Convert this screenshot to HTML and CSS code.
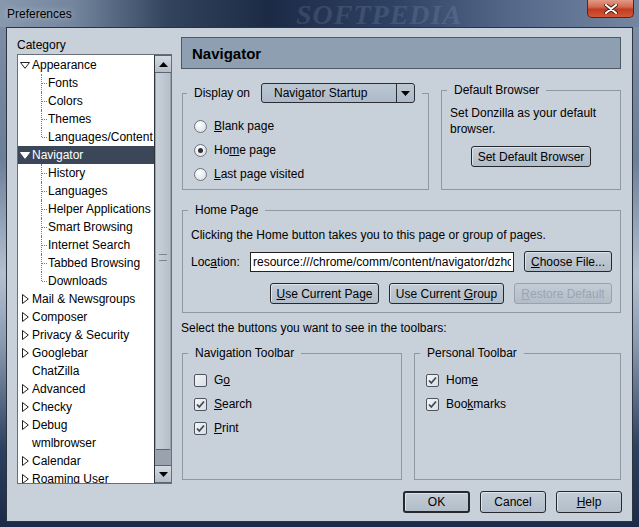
FILE: index.html
```html
<!DOCTYPE html>
<html lang="en">
<head>
    <meta charset="UTF-8">
    <meta name="viewport" content="width=device-width, initial-scale=1.0">
    <title>Preferences</title>
    <link rel="stylesheet" href="styles.css">
</head>
<body>
<div class="window">

    <!-- Title bar -->
    <div class="titlebar">
        <span class="title">Preferences</span>
        <span class="watermark">SOFTPEDIA</span>
        <div class="close-btn">
            <svg width="14" height="10" viewBox="0 0 14 10"><path d="M2 1 L12 9 M12 1 L2 9" stroke="#3a1008" stroke-width="3.6" stroke-linecap="round"/><path d="M2 1 L12 9 M12 1 L2 9" stroke="#fff" stroke-width="2.2" stroke-linecap="round"/></svg>
        </div>
    </div>

    <div class="client">

        <!-- Category tree -->
        <div class="category">
            <div class="category-label">Category</div>
            <div class="tree">
                <div class="tree-rows">
                    <div class="row"><span class="twisty"><svg width="10" height="7" viewBox="0 0 10 7"><path d="M0.5 0.5 H9.5 L5 6.3 Z" fill="#fff" stroke="#222"/></svg></span>Appearance</div>
                    <div class="row child">Fonts</div>
                    <div class="row child">Colors</div>
                    <div class="row child">Themes</div>
                    <div class="row child last">Languages/Content</div>
                    <div class="row selected"><span class="twisty"><svg width="10" height="7" viewBox="0 0 10 7"><path d="M0.5 0.5 H9.5 L5 6.3 Z" fill="#fff" stroke="#fff"/></svg></span>Navigator</div>
                    <div class="row child">History</div>
                    <div class="row child">Languages</div>
                    <div class="row child">Helper Applications</div>
                    <div class="row child">Smart Browsing</div>
                    <div class="row child">Internet Search</div>
                    <div class="row child">Tabbed Browsing</div>
                    <div class="row child last">Downloads</div>
                    <div class="row"><span class="twisty closed"><svg width="7" height="10" viewBox="0 0 7 10"><path d="M0.5 0.5 L6.3 5 L0.5 9.5 Z" fill="#fff" stroke="#222"/></svg></span>Mail &amp; Newsgroups</div>
                    <div class="row"><span class="twisty closed"><svg width="7" height="10" viewBox="0 0 7 10"><path d="M0.5 0.5 L6.3 5 L0.5 9.5 Z" fill="#fff" stroke="#222"/></svg></span>Composer</div>
                    <div class="row"><span class="twisty closed"><svg width="7" height="10" viewBox="0 0 7 10"><path d="M0.5 0.5 L6.3 5 L0.5 9.5 Z" fill="#fff" stroke="#222"/></svg></span>Privacy &amp; Security</div>
                    <div class="row"><span class="twisty closed"><svg width="7" height="10" viewBox="0 0 7 10"><path d="M0.5 0.5 L6.3 5 L0.5 9.5 Z" fill="#fff" stroke="#222"/></svg></span>Googlebar</div>
                    <div class="row"><span class="twisty"></span>ChatZilla</div>
                    <div class="row"><span class="twisty closed"><svg width="7" height="10" viewBox="0 0 7 10"><path d="M0.5 0.5 L6.3 5 L0.5 9.5 Z" fill="#fff" stroke="#222"/></svg></span>Advanced</div>
                    <div class="row"><span class="twisty closed"><svg width="7" height="10" viewBox="0 0 7 10"><path d="M0.5 0.5 L6.3 5 L0.5 9.5 Z" fill="#fff" stroke="#222"/></svg></span>Checky</div>
                    <div class="row"><span class="twisty closed"><svg width="7" height="10" viewBox="0 0 7 10"><path d="M0.5 0.5 L6.3 5 L0.5 9.5 Z" fill="#fff" stroke="#222"/></svg></span>Debug</div>
                    <div class="row"><span class="twisty"></span>wmlbrowser</div>
                    <div class="row"><span class="twisty closed"><svg width="7" height="10" viewBox="0 0 7 10"><path d="M0.5 0.5 L6.3 5 L0.5 9.5 Z" fill="#fff" stroke="#222"/></svg></span>Calendar</div>
                    <div class="row"><span class="twisty closed"><svg width="7" height="10" viewBox="0 0 7 10"><path d="M0.5 0.5 L6.3 5 L0.5 9.5 Z" fill="#fff" stroke="#222"/></svg></span>Roaming User</div>
                </div>
                <div class="scrollbar">
                    <div class="sb-btn"><svg width="9" height="5" viewBox="0 0 9 5"><path d="M0 5 L4.5 0 L9 5 Z" fill="#000"/></svg></div>
                    <div class="sb-thumb"><span class="grip"></span></div>
                    <div class="sb-track"></div>
                    <div class="sb-btn"><svg width="9" height="5" viewBox="0 0 9 5"><path d="M0 0 L9 0 L4.5 5 Z" fill="#000"/></svg></div>
                </div>
            </div>
        </div>

        <!-- Navigator panel -->
        <div class="panel">
            <div class="panel-header">Navigator</div>

            <div class="top-row">
                <fieldset class="group display-on">
                    <legend>
                        <span class="nowrap">Display on</span>
                        <div class="menulist">
                            <span class="menulist-label">Navigator Startup</span>
                            <span class="menulist-arrow"><svg width="9" height="5" viewBox="0 0 9 5"><path d="M0 0 L9 0 L4.5 5 Z" fill="#000"/></svg></span>
                        </div>
                    </legend>
                    <div class="option"><span class="radio"></span><span><u>B</u>lank page</span></div>
                    <div class="option"><span class="radio checked"></span><span>Ho<u>m</u>e page</span></div>
                    <div class="option"><span class="radio"></span><span><u>L</u>ast page visited</span></div>
                </fieldset>

                <fieldset class="group default-browser">
                    <legend>Default Browser</legend>
                    <p class="group-text">Set Donzilla as your default browser.</p>
                    <div class="center">
                        <button class="btn btn-default-browser">Set Default Browser</button>
                    </div>
                </fieldset>
            </div>

            <fieldset class="group home-page">
                <legend>Home Page</legend>
                <p class="home-text">Clicking the Home button takes you to this page or group of pages.</p>
                <div class="location-row">
                    <span class="location-label">Loc<u>a</u>tion:</span>
                    <input class="location-input" type="text" value="resource:///chrome/comm/content/navigator/dzhome.html">
                    <button class="btn btn-choose"><u>C</u>hoose File...</button>
                </div>
                <div class="home-buttons">
                    <button class="btn btn-page"><u>U</u>se Current Page</button>
                    <button class="btn btn-group">Use Current <u>G</u>roup</button>
                    <button class="btn btn-restore" disabled><u>R</u>estore Default</button>
                </div>
            </fieldset>

            <div class="hint">Select the buttons you want to see in the toolbars:</div>

            <div class="toolbar-row">
                <fieldset class="group nav-toolbar">
                    <legend>Navigation Toolbar</legend>
                    <div class="option"><span class="checkbox"></span><span>G<u>o</u></span></div>
                    <div class="option"><span class="checkbox checked"></span><span><u>S</u>earch</span></div>
                    <div class="option"><span class="checkbox checked"></span><span><u>P</u>rint</span></div>
                </fieldset>
                <fieldset class="group personal-toolbar">
                    <legend>Personal Toolbar</legend>
                    <div class="option"><span class="checkbox checked"></span><span>Hom<u>e</u></span></div>
                    <div class="option"><span class="checkbox checked"></span><span>Boo<u>k</u>marks</span></div>
                </fieldset>
            </div>

            <div class="dialog-buttons">
                <button class="btn btn-dialog btn-ok">OK</button>
                <button class="btn btn-dialog">Cancel</button>
                <button class="btn btn-dialog"><u>H</u>elp</button>
            </div>
        </div>
    </div>
</div>
</body>
</html>
```

FILE: styles.css
```css
body {
    margin: 0;
    padding: 0;
    font-family: "Liberation Sans", Arial, sans-serif;
    font-size: 12px;
    color: #000;
}
.window {
    width: 639px;
    height: 527px;
    display: flex;
    flex-direction: column;
    overflow: hidden;
    background: linear-gradient(180deg, #7f90a6 0%, #6c7f98 30%, #b3c0cf 52%, #8a9bb0 65%, #2e4060 85%, #1b2a48 100%);
}
.nowrap {
    white-space: nowrap;
}

/* Title bar */
.titlebar {
    position: relative;
    height: 27px;
    display: flex;
    align-items: flex-start;
    background: linear-gradient(90deg, #8899ae 0%, #72849c 12%, #33445f 26%, #1c2a45 42%, #2f4264 62%, #55688a 80%, #7385a0 100%);
}
.title {
    margin: 7px 0 0 7px;
    color: #000;
    text-shadow: 0 0 6px rgba(255, 255, 255, 0.6);
}
.watermark {
    position: absolute;
    left: 296px;
    top: 1px;
    font-family: "Liberation Serif", serif;
    font-size: 28px;
    line-height: 28px;
    font-weight: bold;
    font-style: italic;
    letter-spacing: 1px;
    color: rgba(150, 170, 198, 0.2);
}
.close-btn {
    margin-left: auto;
    margin-right: 5px;
    width: 47px;
    height: 18px;
    display: flex;
    align-items: center;
    justify-content: center;
    border: 1px solid #5b2418;
    border-top: none;
    border-radius: 0 0 5px 5px;
    background: linear-gradient(180deg, #e29a86 0%, #d26b52 40%, #c23b1f 55%, #d2583a 100%);
    box-sizing: border-box;
}

/* Client area */
.client {
    flex: 1;
    margin: 0 6px 5px 6px;
    border: 1px solid #2c3440;
    background-color: #c8d0d9;
    display: flex;
    padding: 0 10px 0 10px;
    gap: 9px;
}

/* Category tree */
.category {
    width: 155px;
}
.category-label {
    margin-top: 9px;
    line-height: 16px;
}
.tree {
    margin-top: 1px;
    height: 430px;
    box-sizing: border-box;
    border: 1px solid #6a6f76;
    background: #fff;
    display: flex;
}
.tree-rows {
    flex: 1;
    padding-top: 1px;
    overflow: hidden;
}
.row {
    position: relative;
    height: 18px;
    line-height: 18px;
    display: flex;
    align-items: center;
    white-space: nowrap;
}
.row.selected {
    background-color: #3b4758;
    color: #fff;
}
.twisty {
    width: 12px;
    height: 18px;
    margin-left: 2px;
    display: flex;
    align-items: center;
}
.twisty.closed {
    padding-left: 2px;
    width: 10px;
}
.row.child {
    padding-left: 30px;
}
.row.child::before {
    content: "";
    position: absolute;
    left: 23px;
    top: 0;
    height: 18px;
    border-left: 1px dotted #7a7a7a;
}
.row.child.last::before {
    height: 9px;
}
.row.child::after {
    content: "";
    position: absolute;
    left: 24px;
    top: 9px;
    width: 5px;
    border-top: 1px dotted #7a7a7a;
}
.scrollbar {
    width: 16px;
    display: flex;
    flex-direction: column;
    border-left: 1px solid #2f353d;
    background: #9aa3ad;
}
.sb-btn {
    height: 16px;
    display: flex;
    align-items: center;
    justify-content: center;
    background: linear-gradient(180deg, #d3dae2, #b3bec9);
    border-bottom: 1px solid #5c646e;
    border-top: 1px solid #5c646e;
}
.sb-thumb {
    flex: 1;
    margin: 0 1px;
    display: flex;
    align-items: flex-end;
    justify-content: center;
    padding-bottom: 188px;
    background: linear-gradient(90deg, #c9d1d9, #b6c0ca);
    border-bottom: 1px solid #5c646e;
}
.grip {
    width: 8px;
    height: 5px;
    border-top: 1px solid #7b858f;
    border-bottom: 1px solid #7b858f;
    position: relative;
}
.sb-track {
    height: 15px;
}

/* Right panel */
.panel {
    width: 440px;
}
.panel-header {
    margin-top: 9px;
    height: 32px;
    box-sizing: border-box;
    border: 1px solid #4e5966;
    background-color: #8e9fb1;
    padding-left: 10px;
    display: flex;
    align-items: center;
    font-size: 15px;
    font-weight: bold;
}
.group {
    margin: 0;
    min-width: 0;
    border: 1px solid #8f99a4;
    box-sizing: border-box;
}
.group legend {
    padding: 0 7px;
    line-height: 16px;
}
.top-row {
    margin-top: 14px;
    margin-left: 1px;
    height: 107px;
    display: flex;
    gap: 12px;
}
.display-on {
    width: 247px;
    padding: 11px 11px 0 11px;
}
.display-on legend {
    margin-left: -7px;
    display: flex;
    align-items: center;
    gap: 11px;
}
.menulist {
    width: 154px;
    height: 20px;
    box-sizing: border-box;
    border: 1px solid #2a2d31;
    border-radius: 3px;
    background: linear-gradient(180deg, #bcc7d2, #aebaca);
    display: flex;
}
.menulist-label {
    flex: 1;
    padding-left: 12px;
    line-height: 18px;
}
.menulist-arrow {
    width: 17px;
    border-left: 1px solid #2a2d31;
    display: flex;
    align-items: center;
    justify-content: center;
}
.option {
    height: 24px;
    display: flex;
    align-items: center;
    gap: 7px;
}
.radio {
    width: 13px;
    height: 13px;
    box-sizing: border-box;
    border-radius: 50%;
    border: 1px solid #6f7680;
    background: radial-gradient(circle at 40% 35%, #ffffff, #dfe4ea 70%, #c9d0d8);
    display: flex;
    align-items: center;
    justify-content: center;
}
.radio.checked::after {
    content: "";
    width: 5px;
    height: 5px;
    border-radius: 50%;
    background: #2f3338;
}
.checkbox {
    width: 13px;
    height: 13px;
    box-sizing: border-box;
    border: 1px solid #4e555e;
    border-radius: 2px;
    background: linear-gradient(135deg, #f4f6f8, #d9dee4);
}
.checkbox.checked {
    background: url("data:image/svg+xml;utf8,<svg xmlns='http://www.w3.org/2000/svg' width='11' height='11'><path d='M2 5.5 L4.3 8 L9 2.5' fill='none' stroke='%23434a52' stroke-width='1.8'/></svg>") no-repeat center, linear-gradient(135deg, #f4f6f8, #d9dee4);
}
.default-browser {
    width: 180px;
    padding: 8px 8px 0 8px;
}
.default-browser legend {
    margin-left: -3px;
    line-height: 14px;
}
.group-text {
    margin: 0;
    line-height: 16px;
}
.center {
    display: flex;
    justify-content: center;
    margin-top: 9px;
}

/* Buttons */
.btn {
    height: 21px;
    padding: 0;
    box-sizing: border-box;
    border: 1px solid #25282c;
    border-radius: 3px;
    background: linear-gradient(180deg, #c3ccd6, #b2bdc9);
    box-shadow: inset 1px 1px 0 #dde3ea;
    font-family: inherit;
    font-size: 12px;
    color: #000;
}
.btn:disabled {
    border-color: #98a2ad;
    color: #9aa4af;
    box-shadow: none;
}
.btn-default-browser { width: 120px; }
.btn-choose { width: 88px; }
.btn-page { width: 109px; }
.btn-group { width: 115px; }
.btn-restore { width: 98px; }

.home-page {
    margin-top: 12px;
    margin-left: 1px;
    width: 439px;
    padding: 9px 8px 8px 8px;
}
.home-page legend {
    margin-left: -3px;
}
.home-text {
    margin: 0;
    line-height: 16px;
}
.location-row {
    margin-top: 8px;
    display: flex;
    align-items: center;
}
.location-label {
    width: 59px;
}
.location-input {
    width: 264px;
    height: 20px;
    box-sizing: border-box;
    margin: 0 10px 0 0;
    padding: 0 2px;
    border: 1px solid #222;
    background: #fff;
    font-family: inherit;
    font-size: 12px;
    color: #000;
}
.home-buttons {
    margin-top: 11px;
    display: flex;
    justify-content: flex-end;
    gap: 10px;
}
.hint {
    margin-top: 7px;
    line-height: 16px;
}
.toolbar-row {
    margin-top: 9px;
    margin-left: 1px;
    height: 135px;
    display: flex;
    gap: 12px;
}
.nav-toolbar {
    width: 220px;
    padding: 7px 11px 0 11px;
}
.personal-toolbar {
    width: 207px;
    padding: 7px 11px 0 11px;
}
.nav-toolbar legend,
.personal-toolbar legend {
    margin-left: -6px;
}
.dialog-buttons {
    margin-top: 11px;
    margin-right: -1px;
    display: flex;
    justify-content: flex-end;
    gap: 10px;
}
.btn-dialog {
    width: 66px;
    height: 22px;
}
.btn-ok {
    width: 67px;
    border-width: 2px;
}
```
